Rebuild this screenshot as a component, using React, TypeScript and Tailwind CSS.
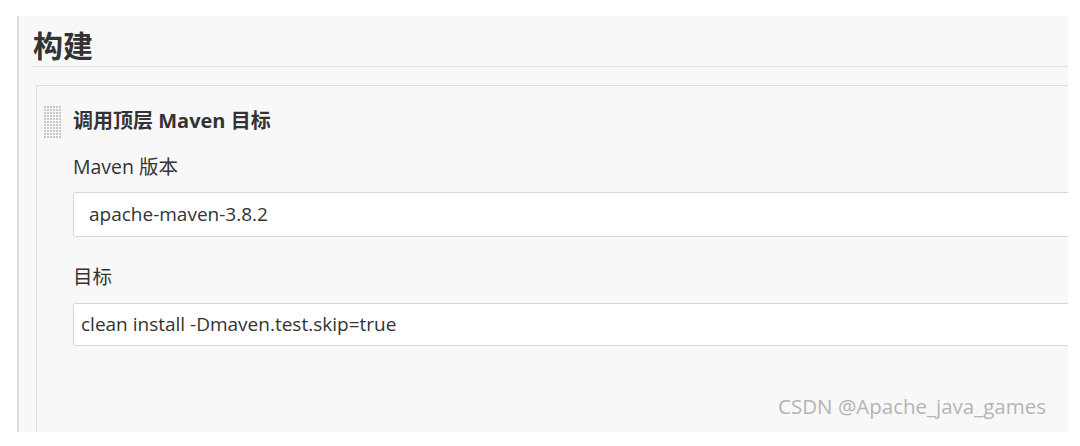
import React from "react";

const font = { fontFamily: '"Open Sans", "Noto Sans CJK SC", sans-serif' };

function Handle() {
  const dots = [];
  for (let r = 0; r < 11; r++) {
    for (let c = 0; c < 6; c++) {
      dots.push(<rect key={r + "-" + c} x={c * 3} y={r * 3} width="2" height="2" fill="#c8c8c8" />);
    }
  }
  return (
    <svg width="18" height="33" viewBox="0 0 18 33" className="shrink-0">
      {dots}
    </svg>
  );
}

export default function App() {
  return (
    <div className="w-[1080px] h-[446px] bg-white pt-4 pl-[17px] overflow-hidden" style={font}>
      <div className="w-[1051px] h-[416px] bg-[#f8f8f8] border-l-2 border-[#dcdcdc] pl-[14px] overflow-hidden">
        <div className="h-[51px] border-b border-[#e2e2e2] flex items-end pb-[2px]">
          <span className="text-[30px] leading-[36px] font-bold text-[#333]">构建</span>
        </div>
        <div className="mt-[18px] ml-[3px] w-[1100px] h-[400px] border-l border-t border-[#dedede] pl-[7px] pt-[20px]">
          <div className="flex items-start">
            <Handle />
            <div className="ml-[11px] flex-1">
              <div className="text-[20px] leading-[30px] font-bold text-[#333]">调用顶层 Maven 目标</div>
              <div className="mt-[19px] text-[19.5px] leading-[24px] text-[#333]">Maven 版本</div>
              <div className="mt-[13px] h-[45px] bg-white border border-[#d6d6d6] rounded-[2px] flex items-center pl-[15px] text-[19px] text-[#333]">
                apache-maven-3.8.2
              </div>
              <div className="mt-[28px] text-[19.5px] leading-[24px] text-[#333]">目标</div>
              <div className="mt-[14px] h-[43px] bg-white border border-[#d6d6d6] rounded-[2px] flex items-center pl-[7px] text-[19px] text-[#333]">
                clean install -Dmaven.test.skip=true
              </div>
            </div>
          </div>
          <div className="w-[1002px] flex justify-end mt-[46px]">
            <span className="text-[20.5px] leading-[28px] text-[#b4b4b4]">CSDN @Apache_java_games</span>
          </div>
        </div>
      </div>
    </div>
  );
}
